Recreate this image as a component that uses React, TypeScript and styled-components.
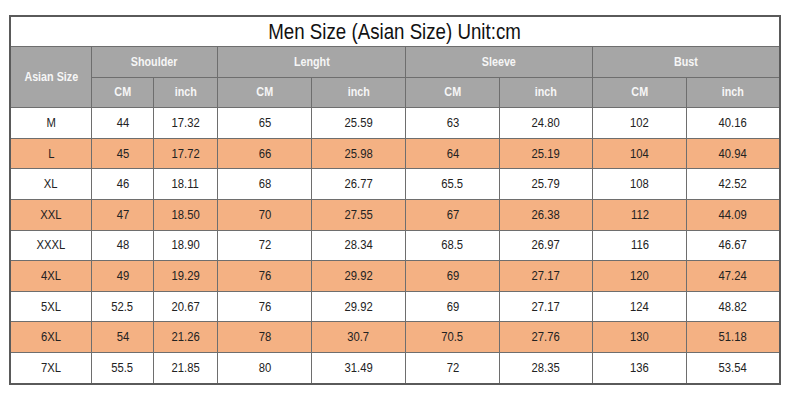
import React from 'react';
import styled, { createGlobalStyle } from 'styled-components';

const GlobalStyle = createGlobalStyle`
  html, body {
    margin: 0;
    padding: 0;
    background: #ffffff;
  }
  body {
    font-family: 'Liberation Sans', Arial, sans-serif;
  }
`;

type Row = { size: string; values: string[] };

const rows: Row[] = [
  { size: 'M', values: ['44', '17.32', '65', '25.59', '63', '24.80', '102', '40.16'] },
  { size: 'L', values: ['45', '17.72', '66', '25.98', '64', '25.19', '104', '40.94'] },
  { size: 'XL', values: ['46', '18.11', '68', '26.77', '65.5', '25.79', '108', '42.52'] },
  { size: 'XXL', values: ['47', '18.50', '70', '27.55', '67', '26.38', '112', '44.09'] },
  { size: 'XXXL', values: ['48', '18.90', '72', '28.34', '68.5', '26.97', '116', '46.67'] },
  { size: '4XL', values: ['49', '19.29', '76', '29.92', '69', '27.17', '120', '47.24'] },
  { size: '5XL', values: ['52.5', '20.67', '76', '29.92', '69', '27.17', '124', '48.82'] },
  { size: '6XL', values: ['54', '21.26', '78', '30.7', '70.5', '27.76', '130', '51.18'] },
  { size: '7XL', values: ['55.5', '21.85', '80', '31.49', '72', '28.35', '136', '53.54'] },
];

const groups = ['Shoulder', 'Lenght', 'Sleeve', 'Bust'];

const App = () => {
  return (
    <>
      <GlobalStyle />
      <Page>
        <Chart>
          <Title>
            <Narrow $scale={0.85}>Men Size (Asian Size) Unit:cm</Narrow>
          </Title>
          <SizeHead>
            <Narrow $scale={0.86}>Asian Size</Narrow>
          </SizeHead>
          {groups.map((g) => (
            <GroupHead key={g}>
              <Narrow $scale={0.86}>{g}</Narrow>
            </GroupHead>
          ))}
          {groups.map((g) => (
            <React.Fragment key={g + '-units'}>
              <UnitHead>
                <Narrow $scale={0.86}>CM</Narrow>
              </UnitHead>
              <UnitHead>
                <Narrow $scale={0.86}>inch</Narrow>
              </UnitHead>
            </React.Fragment>
          ))}
          {rows.map((r, i) => (
            <React.Fragment key={r.size}>
              <Cell $alt={i % 2 === 1}>
                <Narrow $scale={0.9}>{r.size}</Narrow>
              </Cell>
              {r.values.map((v, j) => (
                <Cell key={j} $alt={i % 2 === 1}>
                  <Narrow $scale={0.9}>{v}</Narrow>
                </Cell>
              ))}
            </React.Fragment>
          ))}
        </Chart>
      </Page>
    </>
  );
};

export default App;

const Page = styled.div`
  width: 790px;
  height: 400px;
  padding: 15px 0 0 9px;
  box-sizing: border-box;
`;

const Chart = styled.div`
  width: 772px;
  box-sizing: border-box;
  display: grid;
  grid-template-columns: 80px 61px 63px 93px 93px 93px 92px 93px 92px;
  grid-template-rows: 29px repeat(11, 29.6px);
  gap: 1px;
  background: #6e6e6e;
  border: 2px solid #5a5a5a;
`;

const Narrow = styled.span<{ $scale: number }>`
  display: inline-block;
  white-space: nowrap;
  transform: scaleX(${(p) => p.$scale});
`;

const Title = styled.div`
  grid-column: 1 / -1;
  background: #ffffff;
  display: flex;
  align-items: center;
  justify-content: center;
  font-size: 22px;
  color: #111111;
`;

const HeadBase = styled.div`
  background: #a6a6a6;
  color: #f6f6f6;
  font-weight: 700;
  font-size: 12.5px;
  display: flex;
  align-items: center;
  justify-content: center;
`;

const SizeHead = styled(HeadBase)`
  grid-column: 1;
  grid-row: 2 / span 2;
`;

const GroupHead = styled(HeadBase)`
  grid-column: span 2;
`;

const UnitHead = styled(HeadBase)``;

const Cell = styled.div<{ $alt: boolean }>`
  background: ${(p) => (p.$alt ? '#f4b183' : '#ffffff')};
  color: #222222;
  font-size: 12.5px;
  display: flex;
  align-items: center;
  justify-content: center;
`;
